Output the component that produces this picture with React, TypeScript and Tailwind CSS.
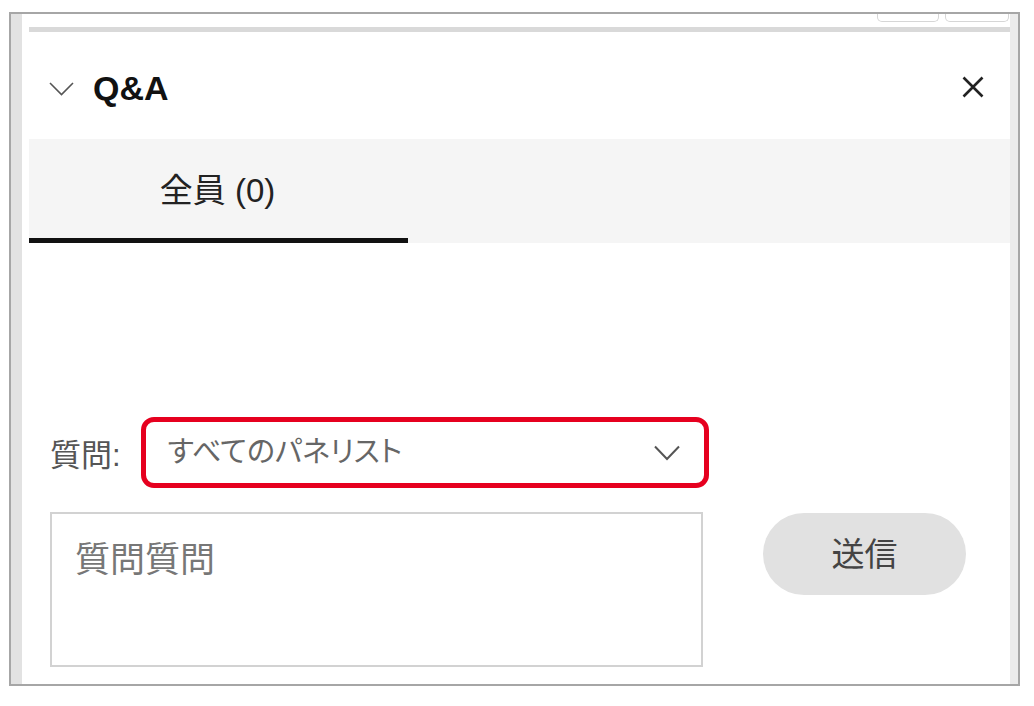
import React from "react";

const JP = "font-['Liberation_Sans','Noto_Sans_CJK_JP',sans-serif]";

export default function App() {
  return (
    <div className={`w-[1034px] h-[706px] bg-white pt-[12px] pl-[9px] ${JP}`}>
      <div className="w-[1011px] h-[674px] border-2 border-[#a6a6a6] flex">
        <div className="w-[11px] bg-[#e2e2e2]" />
        <div className="w-[988px] flex flex-col">
          <div className="h-[13px] flex justify-end gap-[6px] pr-[1px]">
            <div className="w-[62px] h-[8px] border border-t-0 border-[#d6d6d6] rounded-b-[5px]" />
            <div className="w-[64px] h-[8px] border border-t-0 border-[#d6d6d6] rounded-b-[5px]" />
          </div>
          <div className="ml-[7px] h-[5px] bg-[#d9d9d9]" />
          <div className="h-[107px] flex items-center pt-[5px] pl-[27px] pr-[26px]">
            <svg width="25" height="14" viewBox="0 0 25 14" className="mt-[2px]">
              <polyline points="1,1 12.5,12.5 24,1" fill="none" stroke="#555" strokeWidth="1.6" />
            </svg>
            <span className="ml-[19px] text-[34px] leading-none font-bold text-[#111] font-['Liberation_Sans',sans-serif]">Q&amp;A</span>
            <div className="flex-1" />
            <svg width="22" height="22" viewBox="0 0 22 22" className="-mt-[2px]">
              <path d="M1.5 1.5 L20.5 20.5 M20.5 1.5 L1.5 20.5" stroke="#222" strokeWidth="2.6" />
            </svg>
          </div>
          <div className="ml-[7px] h-[104px] bg-[#f5f5f5] flex">
            <div className="w-[379px] flex flex-col">
              <div className="flex-1 flex items-center justify-center pt-[4px] pr-[2px] text-[33px] text-[#222]">
                全員 (0)
              </div>
              <div className="h-[5px] bg-[#111]" />
            </div>
          </div>
          <div className="flex-1 flex flex-col pl-[28px]">
            <div className="mt-[174px] flex items-center">
              <span className="text-[31px] text-[#555] leading-none mt-[6px] [font-feature-settings:'palt']">質問:</span>
              <div className="ml-[20px] w-[568px] h-[71px] border-[5px] border-[#e6001f] rounded-[13px] flex items-center pl-[22px] pr-[24px]">
                <span className="text-[29px] text-[#666] leading-none [font-feature-settings:'palt']">すべてのパネリスト</span>
                <div className="flex-1" />
                <svg width="26" height="16" viewBox="0 0 26 16">
                  <polyline points="1,1.5 13,14 25,1.5" fill="none" stroke="#555" strokeWidth="2" />
                </svg>
              </div>
            </div>
            <div className="mt-[24px] flex items-start">
              <div className="w-[653px] h-[155px] border-2 border-[#d2d2d2] pl-[23px] pt-[26px]">
                <span className="text-[35px] text-[#777] leading-[40px]">質問質問</span>
              </div>
              <div className="ml-[60px] mt-[1px] w-[203px] h-[82px] rounded-full bg-[#e1e1e1] flex items-center justify-center">
                <span className="text-[33px] text-[#444] leading-none">送信</span>
              </div>
            </div>
          </div>
        </div>
        <div className="w-[8px] bg-[#ebebeb]" />
      </div>
    </div>
  );
}
